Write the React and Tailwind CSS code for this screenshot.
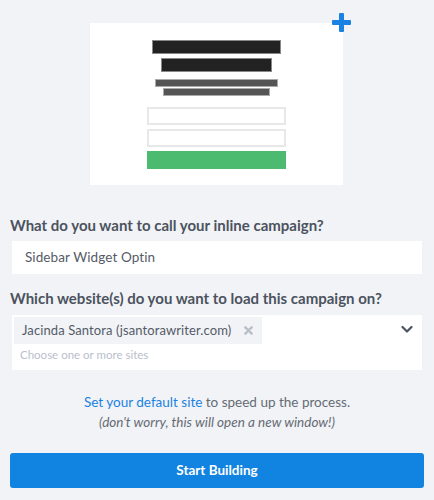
import React from "react";

export default function App() {
  return (
    <div className="w-[434px] h-[500px] bg-[#f1f3f7] relative overflow-hidden" style={{ fontFamily: "Lato, 'Open Sans', sans-serif" }}>
      <div className="relative ml-[90px] pt-[23px] w-[253px]">
        <div className="w-[253px] h-[162px] bg-white flex flex-col items-center pt-[18px]">
          <div className="w-[127px] h-[12px] bg-[#222] outline outline-1 outline-[#888]" />
          <div className="w-[109px] h-[12px] bg-[#222] outline outline-1 outline-[#888] mt-[6px]" />
          <div className="w-[121px] h-[6px] bg-[#555] outline outline-1 outline-[#aaa] mt-[9px]" />
          <div className="w-[105px] h-[6px] bg-[#555] outline outline-1 outline-[#aaa] mt-[3px]" />
          <div className="w-[139px] h-[18px] bg-white border-2 border-[#e8e8e8] mt-[12px]" />
          <div className="w-[139px] h-[18px] bg-white border-2 border-[#e8e8e8] mt-[4px]" />
          <div className="w-[139px] h-[18px] bg-[#4dbb6f] mt-[4px]" />
        </div>
        <svg className="absolute left-[242px] top-[13px]" width="19" height="19" viewBox="0 0 19 19">
          <rect x="7" y="0" width="5" height="19" rx="1" fill="#1a82e2" />
          <rect x="0" y="7" width="19" height="5" rx="1" fill="#1a82e2" />
        </svg>
      </div>

      <div className="px-[12px] mt-[31px]">
        <div className="text-[15px] font-bold text-[#4c535e] ml-[-2px] leading-[18px]">What do you want to call your inline campaign?</div>
        <div className="mt-[7px] h-[33px] bg-white flex items-center px-[13px] text-[13.5px] text-[#555b66] tracking-[0.1px]">Sidebar Widget Optin</div>
        <div className="mt-[15px] text-[15px] font-bold text-[#4c535e] ml-[-2px] leading-[18px]">Which website(s) do you want to load this campaign on?</div>
        <div className="mt-[8px] h-[55px] bg-white relative pl-[2px] pt-[2px]">
          <div className="inline-flex items-center h-[27px] bg-[#f1f3f7] pl-[8px] pr-[9px] text-[13px] text-[#555b66] w-[248px] tracking-[0.1px]">
            <span>Jacinda Santora (jsantorawriter.com)</span>
            <svg className="ml-auto" width="9" height="9" viewBox="0 0 10 10">
              <path d="M1.5 1.5 L8.5 8.5 M8.5 1.5 L1.5 8.5" stroke="#b8bec8" strokeWidth="2.6" strokeLinecap="round" />
            </svg>
          </div>
          <div className="text-[11.5px] text-[#b9c0cc] pl-[6px] mt-[4px] leading-[14px]">Choose one or more sites</div>
          <svg className="absolute right-[9px] top-[10px]" width="12" height="9" viewBox="0 0 12 9">
            <path d="M1.5 2 L6 6.5 L10.5 2" stroke="#4c535e" strokeWidth="2.2" fill="none" strokeLinecap="round" strokeLinejoin="round" />
          </svg>
        </div>
      </div>

      <div className="mt-[22px] text-center text-[13.5px] text-[#666b73] leading-[20px]">
        <div><span className="text-[#1a82e2]">Set your default site</span> to speed up the process.</div>
        <div className="italic">(don't worry, this will open a new window!)</div>
      </div>

      <div className="mx-[10px] mt-[21px] h-[35px] bg-[#1183e0] rounded-[3px] flex items-center justify-center text-white font-bold text-[13.5px]">Start Building</div>
    </div>
  );
}
